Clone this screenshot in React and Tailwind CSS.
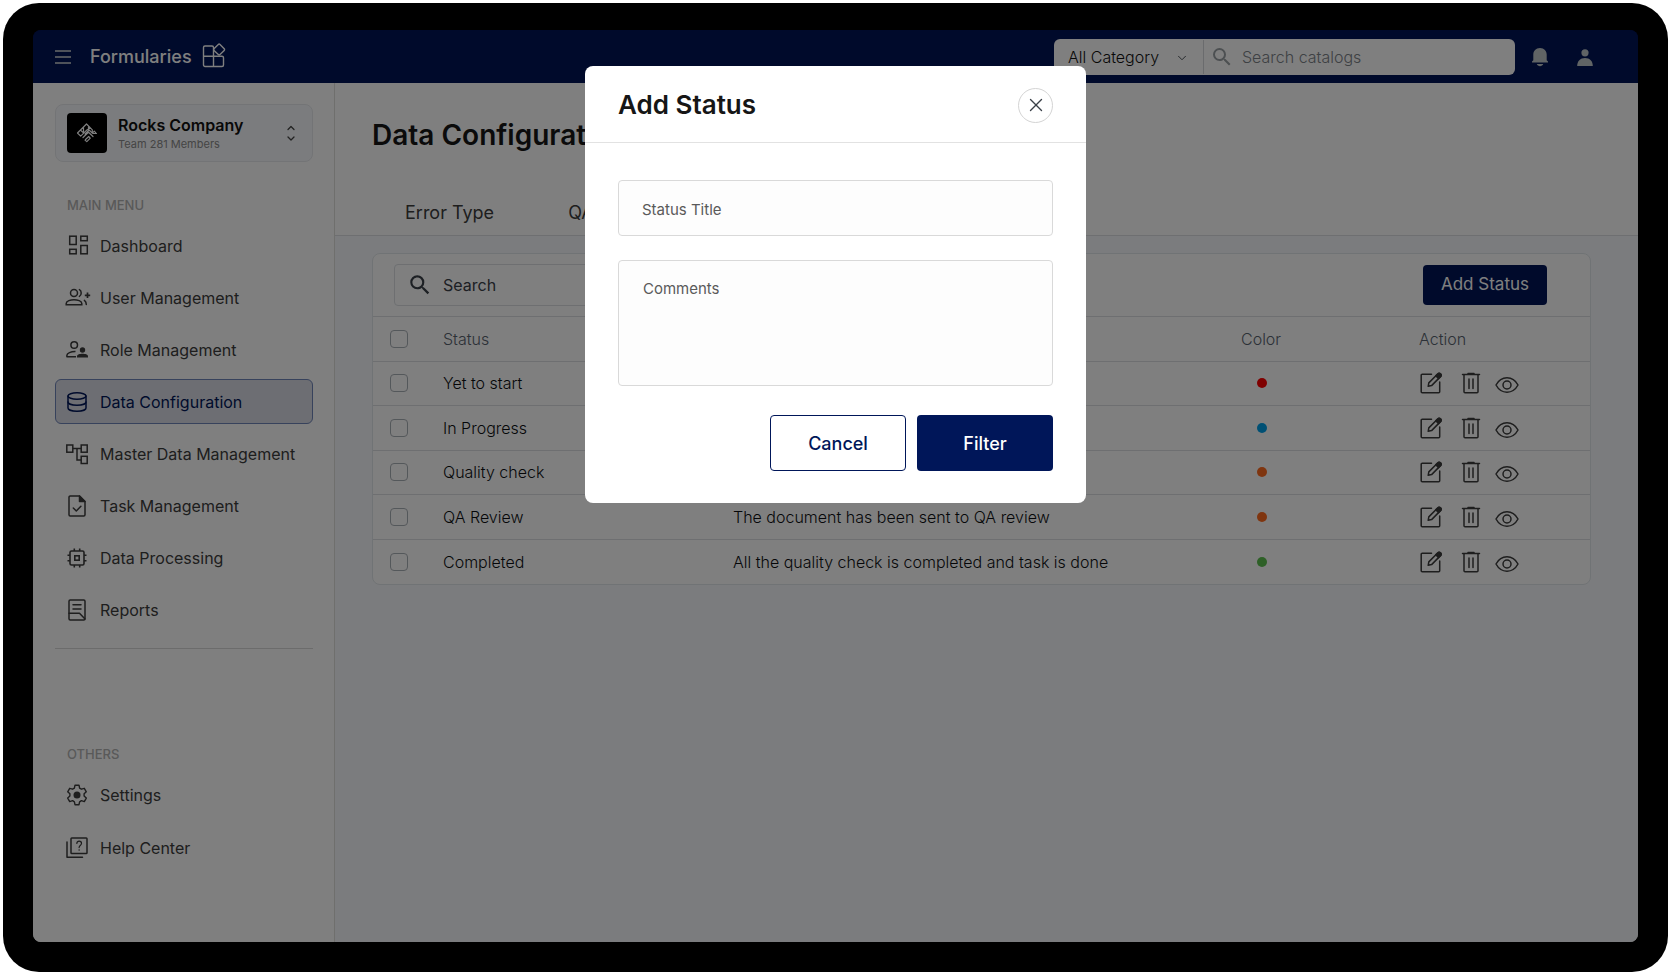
import { MdSearch } from 'react-icons/md'
import { ChevronDown, X } from 'lucide-react'

function Icon({ size = 24, box = 24, className = '', children }) {
  return (
    <svg
      width={size}
      height={size}
      viewBox={`0 0 ${box} ${box}`}
      fill="none"
      stroke="currentColor"
      strokeWidth="1.5"
      strokeLinecap="round"
      strokeLinejoin="round"
      aria-hidden="true"
      className={`shrink-0 overflow-visible ${className}`}
    >
      {children}
    </svg>
  )
}

const DashboardIcon = () => (
  <Icon>
    <g strokeLinejoin="miter" transform="translate(1.500 -1)">
      <rect x="3.200" y="3.200" width="6.500" height="8.300" />
      <rect x="14.300" y="3.200" width="6.500" height="4.500" />
      <rect x="3.200" y="16.300" width="6.500" height="4.500" />
      <rect x="14.300" y="12.500" width="6.500" height="8.300" />
    </g>
  </Icon>
)

const UserPlusIcon = () => (
  <Icon size={26} box={26}>
    <g transform="translate(1 0)">
      <circle cx="9" cy="8" r="3.500" />
      <path d="M1.200 19.800v-1.400c0-2.400 4.400-3.700 7.800-3.700s7.800 1.300 7.800 3.700v1.400z" strokeLinejoin="miter" />
      <path d="M14.400 4.600c2.400 1.200 2.400 5.600 0 6.800M19.400 15.400c1.300.9 1.900 2.400 1.900 4.200" />
      <path d="M22.500 7.600v5.400M19.800 10.300h5.400" strokeWidth="1.700" strokeLinecap="butt" />
    </g>
  </Icon>
)

const RoleIcon = () => (
  <Icon>
    <circle cx="9.200" cy="7" r="3.300" />
    <path d="M11 18.700H1.900v-1.500c0-2.100 4-3.700 8.600-3.600" strokeLinecap="butt" />
    <circle cx="17.500" cy="12" r="2.700" fill="currentColor" stroke="none" />
    <path d="M12 19.400v-1.200c0-1.800 2.900-2.500 5.500-2.500s5.500.7 5.500 2.500v1.200z" fill="currentColor" stroke="none" />
  </Icon>
)

const DatabaseIcon = () => (
  <Icon>
    <ellipse cx="12" cy="6" rx="9" ry="3.200" />
    <path d="M3 6v12c0 1.800 4 3.200 9 3.200s9-1.400 9-3.200V6" />
    <path d="M3 12c0 1.800 4 3.200 9 3.200s9-1.400 9-3.200" />
  </Icon>
)

const TreeIcon = () => (
  <Icon>
    <g strokeLinejoin="miter" strokeLinecap="butt">
      <rect x="1.800" y="3" width="6" height="7.200" />
      <rect x="16.200" y="3" width="6" height="7.200" />
      <rect x="16.200" y="14.300" width="6" height="7.200" />
      <path d="M7.800 6.500h8.400M12 6.500V18h4.200" />
    </g>
  </Icon>
)

const TaskIcon = () => (
  <Icon>
    <path d="M14.500 2H5.200A1.200 1.200 0 0 0 4 3.200v17.600A1.200 1.200 0 0 0 5.200 22h13.600a1.200 1.200 0 0 0 1.200-1.200V7.500z" />
    <path d="M14.500 2v5.500H20z" fill="currentColor" />
    <path d="M8.300 14l3 3 4.600-4.800" />
  </Icon>
)

const CpuIcon = () => (
  <Icon>
    <rect x="5" y="5" width="14" height="14" rx="1.500" strokeWidth="1.600" />
    <rect x="9.800" y="9.800" width="4.400" height="4.400" strokeWidth="1.600" strokeLinejoin="miter" />
    <path d="M9.300 5V2.500M14.700 5V2.500M9.300 21.500V19M14.700 21.500V19M5 9.300H2.500M5 14.700H2.500M21.500 9.300H19M21.500 14.700H19" strokeLinecap="butt" strokeWidth="1.600" />
  </Icon>
)

const ReportIcon = () => (
  <Icon>
    <rect x="4" y="2" width="16" height="20" rx="1.200" />
    <path d="M8 6.700h8M8 11h8M4 15.300h10.500L20 21" />
  </Icon>
)

const SettingsIcon = () => (
  <Icon>
    <path
      strokeWidth="1.400"
      d="M10 2.200h4l.6 2.900 1.800 1.100 2.900-.9 2 3.500-2.200 2v2.300l2.200 2-2 3.500-2.900-.9-1.800 1.100-.6 2.900h-4l-.6-2.900-1.800-1.100-2.900.9-2-3.500 2.200-2v-2.300l-2.200-2 2-3.500 2.900.9 1.800-1.100z"
    />
    <circle cx="12" cy="12" r="3.500" fill="currentColor" stroke="none" />
  </Icon>
)

const HelpIcon = () => (
  <Icon>
    <rect x="6" y="2" width="16" height="15.500" rx="0.800" />
    <path d="M2 6v15.300h15.500" />
    <path d="M11.800 7.400c.2-1.600 1.100-2.200 2.300-2.200 1.400 0 2.400.9 2.400 2.200 0 1.800-2.400 1.900-2.400 4.200" strokeWidth="1.200" />
    <path d="M14.100 14v.1" />
  </Icon>
)

const WidgetsIcon = () => (
  <Icon>
    <path d="M11.500 22.500H3A1.500 1.500 0 0 1 1.500 21v-8.800h10zM11.500 22.500H20a1.500 1.500 0 0 0 1.500-1.500v-7.300a1.500 1.500 0 0 0-1.500-1.500h-8.500zM1.500 12.200V3.500A1.500 1.500 0 0 1 3 2h7a1.500 1.500 0 0 1 1.500 1.500v8.700" strokeWidth="1.400" transform="translate(0 -1)" />
    <path d="M16.300-.6a1.200 1.200 0 0 1 1.700 0l4.200 4.300a1.200 1.200 0 0 1 0 1.700L18 9.600a1.200 1.200 0 0 1-1.700 0L12 5.400a1.200 1.200 0 0 1 0-1.700z" strokeWidth="1.400" />
  </Icon>
)

const RocksLogo = () => (
  <Icon size={24} className="text-white">
    <path d="M11.500 3L2.500 12l3.200 3.200 9-9zM11.500 3l5.800 5.800M5.500 9l3.200 3.200M17.300 8.800v3.400l-3.200-3.200-4 4M8.500 6.200v6M18 12.500h3.500M13.500 6l-.2 3.600M8 16.500l5.500-5.300 4.500 4.300M10.500 18.500l3.200-3 1.600 1.600-3.500 3.500-1.800-1.500M17.300 12.200l2-2 1.500 1.600" strokeWidth="1.200" />
  </Icon>
)

const EditIcon = () => (
  <Icon>
    <path d="M12.500 3.200H3.200A1 1 0 0 0 2.200 4.200v16.500a1 1 0 0 0 1 1h16.500a1 1 0 0 0 1-1V11" />
    <path d="M9.200 15.300l.6-3.400L18.900 2.700a1.600 1.600 0 0 1 2.400 0l.4.400a1.600 1.600 0 0 1 0 2.300L12.600 14.600z" />
    <path d="M16.800 4.800l2.100-2.100a1.600 1.600 0 0 1 2.400 0l.4.400a1.600 1.600 0 0 1 0 2.300l-2.200 2.200z" fill="currentColor" />
  </Icon>
)

const TrashIcon = () => (
  <Icon>
    <path d="M3.500 3.500h17M9 2.600h6M5 3.500v17.200a1 1 0 0 0 1 1h12a1 1 0 0 0 1-1V3.500M10 8v9.500M14 8v9.500" />
  </Icon>
)

const EyeIcon = () => (
  <Icon>
    <path d="M1 12c2.500-4.600 6.300-7.200 11-7.200s8.500 2.600 11 7.200c-2.500 4.600-6.300 7.200-11 7.200S3.500 16.600 1 12z" />
    <circle cx="12" cy="12" r="4" />
  </Icon>
)

const mainMenu = [
  { label: 'Dashboard', icon: <DashboardIcon /> },
  { label: 'User Management', icon: <UserPlusIcon /> },
  { label: 'Role Management', icon: <RoleIcon /> },
  { label: 'Data Configuration', icon: <DatabaseIcon />, active: true },
  { label: 'Master Data Management', icon: <TreeIcon /> },
  { label: 'Task Management', icon: <TaskIcon /> },
  { label: 'Data Processing', icon: <CpuIcon /> },
  { label: 'Reports', icon: <ReportIcon /> },
]

const otherMenu = [
  { label: 'Settings', icon: <SettingsIcon /> },
  { label: 'Help Center', icon: <HelpIcon /> },
]

const statuses = [
  { name: 'Yet to start', description: '', dot: 'bg-[#ff0000]' },
  { name: 'In Progress', description: '', dot: 'bg-[#00a0e9]' },
  { name: 'Quality check', description: '', dot: 'bg-[#ff6a1f]' },
  { name: 'QA Review', description: 'The document has been sent to QA review', dot: 'bg-[#ff6a1f]' },
  { name: 'Completed', description: 'All the quality check is completed and task is done', dot: 'bg-[#5cc04e]' },
]

function NavItem({ label, icon, active }) {
  return (
    <li>
      <a
        href="#"
        aria-current={active ? 'page' : undefined}
        className={`flex h-[45px] items-center gap-2.5 rounded-md border pl-2 text-base ${
          active ? 'border-[#6f84b8] bg-[#dadde6] text-[#001659]' : 'border-transparent text-[#3c3c3c]'
        }`}
      >
        <span className="flex w-[26px] shrink-0 justify-center">{icon}</span>
        {label}
      </a>
    </li>
  )
}

function Header() {
  return (
    <header className="flex h-[53px] shrink-0 items-center bg-[#001456] pr-11 pl-[22px] text-white">
      <button type="button" aria-label="Menu" className="text-[#d0d4d4]">
        <svg width="16" height="16" viewBox="0 0 16 16" fill="none" stroke="currentColor" strokeWidth="1.500" aria-hidden="true">
          <path d="M0 2h16M0 8h16M0 14h16" />
        </svg>
      </button>
      <a href="#" className="ml-[19px] flex items-center gap-2.5 text-lg font-medium">
        Formularies
        <WidgetsIcon />
      </a>
      <form className="ml-auto flex h-9 w-[461px] rounded-md bg-white text-base font-light" onSubmit={(e) => e.preventDefault()}>
        <div className="relative my-px w-[150px] shrink-0 border-r border-[#d5d7da]">
          <select aria-label="Category" className="h-full w-full appearance-none bg-transparent pl-3.5 text-[#111]">
            <option>All Category</option>
          </select>
          <ChevronDown size={14} strokeWidth={1.500} className="pointer-events-none absolute top-[11px] right-3.5 text-[#333a42]" />
        </div>
        <label className="flex min-w-0 flex-1 items-center gap-2 pl-1.5">
          <MdSearch size={24} className="shrink-0 text-[#9aa0a4]" />
          <input type="search" aria-label="Search catalogs" placeholder="Search catalogs" className="min-w-0 flex-1 bg-transparent outline-none placeholder:text-[#7c8288]" />
        </label>
      </form>
      <button type="button" aria-label="Notifications" className="ml-4 text-[#c0c8ca]">
        <svg width="18" height="20" viewBox="0 0 18 20" fill="currentColor" aria-hidden="true">
          <path d="M9 1C4.800 1 2.300 4 2.300 7.500v5.700L1 14.600v.9h16v-.9l-1.300-1.400V7.500C15.700 4 13.200 1 9 1zM5.800 17h6.400c-.5 1.400-1.700 2.200-3.200 2.200S6.300 18.400 5.800 17z" />
        </svg>
      </button>
      <button type="button" aria-label="Account" className="ml-[27px] text-[#c0c8ca]">
        <svg width="18" height="20" viewBox="0 0 18 20" fill="currentColor" aria-hidden="true">
          <circle cx="9" cy="5.800" r="3.600" />
          <path d="M1.200 19c0-4.900 3-8 7.800-8s7.800 3.100 7.800 8z" />
        </svg>
      </button>
    </header>
  )
}

function Sidebar() {
  return (
    <aside className="w-[302px] shrink-0 border-r border-[#dfdfda] bg-white pt-[21px] pr-[21px] pl-[22px]">
      <button type="button" className="flex h-[58px] w-full items-center rounded-lg border border-[#e6e8ec] bg-[#f7f9fc] px-[11px] text-left">
        <span className="flex size-10 shrink-0 items-center justify-center rounded bg-black">
          <RocksLogo />
        </span>
        <span className="ml-[11px] flex-1 pt-px">
          <span className="block text-base leading-5 font-semibold text-[#111]">Rocks Company</span>
          <span className="block text-[11px] leading-[18px] text-[#8a8a8a]">Team 281 Members</span>
        </span>
        <svg width="20" height="20" viewBox="0 0 20 20" fill="none" stroke="#444" strokeWidth="1.300" strokeLinecap="round" strokeLinejoin="round" aria-hidden="true">
          <path d="M7 6.500l3-3 3 3M7 14l3 3 3-3" />
        </svg>
      </button>
      <nav aria-label="Main">
        <h2 className="mt-[33px] pl-3 text-[13px] leading-5 font-medium text-[#b2b2b2]">MAIN MENU</h2>
        <ul className="mt-2 flex flex-col gap-[7px]">
          {mainMenu.map((item) => (
            <NavItem key={item.label} {...item} />
          ))}
        </ul>
        <hr className="mt-4 border-[#d8d8d8]" />
        <h2 className="mt-[95px] pl-3 text-[13px] leading-5 font-medium text-[#b2b2b2]">OTHERS</h2>
        <ul className="mt-2 flex flex-col gap-2">
          {otherMenu.map((item) => (
            <NavItem key={item.label} {...item} />
          ))}
        </ul>
      </nav>
    </aside>
  )
}

function Checkbox({ label }) {
  return (
    <input
      type="checkbox"
      aria-label={label}
      className="block size-[18px] appearance-none rounded border border-[#a9b0b6] bg-white checked:bg-[#001659]"
    />
  )
}

function StatusTable() {
  return (
    <table className="h-[267px] w-full table-fixed border-collapse text-left text-base font-light">
      <colgroup>
        <col className="w-[70px]" />
        <col className="w-[290px]" />
        <col />
        <col className="w-[178px]" />
        <col className="w-[171px]" />
      </colgroup>
      <thead>
        <tr className="h-11 border-b border-[#dcdfe2] text-[#59636f]">
          <th className="pl-[17px]"><Checkbox label="Select all" /></th>
          <th className="font-light">Status</th>
          <th className="font-light">Description</th>
          <th className="font-light">Color</th>
          <th className="font-light">Action</th>
        </tr>
      </thead>
      <tbody className="text-[#0d0f12]">
        {statuses.map((s) => (
          <tr key={s.name} className="h-11 border-b border-[#dcdfe2] last:border-b-0">
            <td className="pl-[17px]"><Checkbox label={`Select ${s.name}`} /></td>
            <td>{s.name}</td>
            <td>{s.description}</td>
            <td className="pl-4"><span className={`block size-2.5 rounded-full ${s.dot}`} /></td>
            <td>
              <div className="flex items-center text-[#3c3c3c]">
                <button type="button" aria-label={`Edit ${s.name}`}><EditIcon /></button>
                <button type="button" aria-label={`Delete ${s.name}`} className="ml-4"><TrashIcon /></button>
                <button type="button" aria-label={`View ${s.name}`} className="mt-1 ml-3"><EyeIcon /></button>
              </div>
            </td>
          </tr>
        ))}
      </tbody>
    </table>
  )
}

function Content() {
  return (
    <main className="min-w-0 flex-1 bg-[#f7f9fc]">
      <div className="flex h-[153px] flex-col justify-between border-b border-[#dcdfe2] bg-white pl-[37px]">
        <h1 className="mt-8 text-[28px] leading-10 font-semibold text-[#161616]">Data Configuration</h1>
        <nav aria-label="Configuration" className="flex gap-[74px] pb-2 pl-[33px] text-lg text-[#3c3c3c]">
          <a href="#">Error Type</a>
          <a href="#">QA Type</a>
        </nav>
      </div>
      <section aria-label="Statuses" className="mt-[17px] mr-[47px] ml-[37px] rounded-lg border border-[#e1e6ea] bg-white">
        <div className="flex h-[63px] items-center justify-between border-b border-[#dcdfe2] pr-[43px] pl-[21px]">
          <label className="flex h-[42px] w-[400px] items-center rounded border border-[#dcdfe2] pl-3">
            <MdSearch size={26} className="shrink-0 text-[#3a4048]" />
            <input type="search" aria-label="Search statuses" placeholder="Search" className="ml-2.5 min-w-0 flex-1 bg-transparent text-base outline-none placeholder:text-[#3a4048]" />
          </label>
          <button type="button" className="h-10 w-[124px] rounded bg-[#001456] text-[17px] text-white">Add Status</button>
        </div>
        <StatusTable />
      </section>
    </main>
  )
}

function AddStatusDialog() {
  return (
    <div className="absolute inset-0 flex items-start justify-center bg-black/50 pt-9">
      <form
        role="dialog"
        aria-modal="true"
        aria-labelledby="dialog-title"
        className="w-[501px] rounded-lg bg-white"
        onSubmit={(e) => e.preventDefault()}
      >
        <div className="flex h-[77px] items-center justify-between border-b border-[#e2e2e2] px-[33px] pt-0.5">
          <h2 id="dialog-title" className="text-[26px] leading-8 font-semibold text-[#161616]">Add Status</h2>
          <button type="button" aria-label="Close" className="flex size-[35px] items-center justify-center rounded-full border border-[#d4d4d4] text-[#3a4048]">
            <X size={22} strokeWidth={1.500} />
          </button>
        </div>
        <div className="flex flex-col gap-6 px-[33px] pt-[37px]">
          <input
            type="text"
            aria-label="Status Title"
            placeholder="Status Title"
            className="h-14 w-full rounded border border-[#d9d9d9] bg-[#fdfdfd] px-[23px] pt-0.5 text-[15px] outline-none placeholder:text-[#5a5a5a]"
          />
          <textarea
            aria-label="Comments"
            placeholder="Comments"
            className="block h-[126px] w-full resize-none rounded border border-[#d9d9d9] bg-[#fdfdfd] px-6 py-4 text-[15px] leading-6 outline-none placeholder:text-[#5a5a5a]"
          />
        </div>
        <div className="flex justify-end gap-[11px] px-[33px] pt-[29px] pb-8 text-lg font-medium">
          <button type="button" className="h-14 w-[136px] rounded border border-[#001659] pt-0.5 text-[#001659]">Cancel</button>
          <button type="submit" className="h-14 w-[136px] rounded bg-[#001659] pt-0.5 text-white">Filter</button>
        </div>
      </form>
    </div>
  )
}

export default function App() {
  return (
    <div className="flex min-h-screen bg-white p-[3px] font-['Inter',sans-serif]">
      <div className="flex flex-1 rounded-[36px] bg-black px-[30px] pt-[27px] pb-[30px]">
        <div className="relative flex min-w-0 flex-1 flex-col overflow-hidden rounded-lg">
          <Header />
          <div className="flex flex-1">
            <Sidebar />
            <Content />
          </div>
          <AddStatusDialog />
        </div>
      </div>
    </div>
  )
}
